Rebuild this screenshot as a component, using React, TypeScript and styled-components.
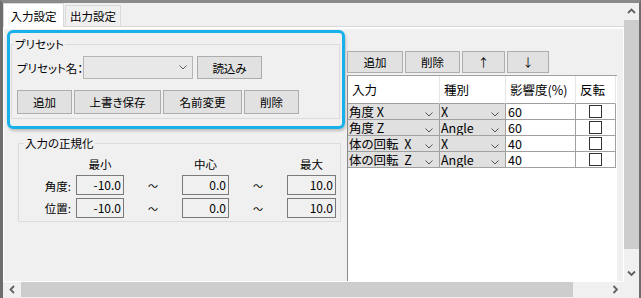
import React from "react";
import styled, { createGlobalStyle } from "styled-components";

const uiFont = `"Noto Sans CJK JP", "Noto Sans", sans-serif`;

const GlobalStyle = createGlobalStyle`
  html, body {
    margin: 0;
    padding: 0;
    background: #f0f0f0;
  }
  body {
    font-family: ${uiFont};
    font-feature-settings: "palt";
  }
`;

const Window = styled.div`
  width: 641px;
  height: 298px;
  box-sizing: border-box;
  border-top: 3px solid #8a8a8a;
  border-left: 3px solid #6e6e6e;
  border-right: 2px solid #6e6e6e;
  background: #f0f0f0;
  display: grid;
  grid-template-columns: 621px 15px;
  grid-template-rows: 279px 16px;
  font-family: ${uiFont};
  font-size: 11.5px;
  color: #000;
  overflow: hidden;
`;

const TabControl = styled.div`
  display: flex;
  flex-direction: column;
  min-height: 0;
`;

const TabStrip = styled.div`
  height: 23px;
  display: flex;
  align-items: flex-end;
`;

const Tab = styled.div<{ $active?: boolean; $w: number }>`
  width: ${(p) => p.$w}px;
  height: ${(p) => (p.$active ? 24 : 21)}px;
  box-sizing: border-box;
  display: flex;
  align-items: center;
  justify-content: center;
  background: ${(p) => (p.$active ? "#ffffff" : "#f0f0f0")};
  border: 1px solid #d9d9d9;
  border-bottom: none;
  margin-bottom: ${(p) => (p.$active ? -1 : 0)}px;
  margin-right: 1px;
  position: relative;
  z-index: ${(p) => (p.$active ? 1 : 0)};
`;

const TabPage = styled.div`
  flex: 1;
  border-top: 1px solid #d9d9d9;
  display: flex;
  min-height: 0;
`;

const PageInner = styled.div`
  flex: 1;
  border: 1px solid #ffffff;
  border-top-width: 2px;
  display: flex;
  min-height: 0;
`;

const LeftPane = styled.div`
  width: 343px;
  display: flex;
  flex-direction: column;
`;

const Highlight = styled.div`
  margin: 1px 0 0 3px;
  width: 338px;
  height: 99px;
  box-sizing: border-box;
  border: 3px solid #17b1ea;
  border-radius: 6px;
  box-shadow: 1px 2px 3px rgba(0, 0, 0, 0.22);
  display: flex;
`;

const Group = styled.fieldset`
  margin: 0;
  padding: 0;
  border: 1px solid #dcdcdc;
  min-inline-size: 0;
  box-sizing: border-box;
`;

const PresetGroup = styled(Group)`
  margin: 4px 2px 0 1px;
  width: 329px;
  height: 82px;
`;

const NormGroup = styled(Group)`
  margin: 7px 0 0 14px;
  width: 323px;
  height: 86px;
`;

const Legend = styled.legend<{ $offset: number }>`
  padding: 0 1px;
  margin-left: ${(p) => p.$offset}px;
  line-height: 14px;
  font-size: 11.5px;
`;

const PresetBody = styled.div`
  padding: 5px 0 0 5px;
  display: flex;
  flex-direction: column;
  gap: 11px;
`;

const FormRow = styled.div<{ $h: number }>`
  height: ${(p) => p.$h}px;
  display: flex;
  gap: 2px;
  align-items: stretch;
`;

const FieldLabel = styled.div`
  width: 64px;
  white-space: nowrap;
  display: flex;
  align-items: center;
`;

const Combo = styled.div<{ $w: number }>`
  width: ${(p) => p.$w}px;
  box-sizing: border-box;
  background: #e8e8e8;
  border: 1px solid #b5b5b5;
  display: flex;
  align-items: center;
  justify-content: flex-end;
  padding-right: 5px;
  margin-right: 2px;
`;

const Button = styled.button<{ $w: number }>`
  width: ${(p) => p.$w}px;
  box-sizing: border-box;
  margin: 0;
  padding: 0;
  background: #e1e1e1;
  border: 1px solid #adadad;
  font: inherit;
  font-feature-settings: "palt";
  color: #000;
  display: flex;
  align-items: center;
  justify-content: center;
`;

const NormGrid = styled.div`
  display: grid;
  grid-template-columns: 57px 48px 58px 47px 58px 49px;
  grid-template-rows: 17px 20px 20px;
  row-gap: 3px;
  padding-top: 5px;
  align-items: center;
  & > :nth-child(7) {
    margin-top: 1px;
  }
`;

const ColHead = styled.div`
  text-align: center;
`;

const RowLabel = styled.div`
  text-align: right;
  padding-right: 5px;
`;

const Tilde = styled.div`
  text-align: center;
  font-size: 10px;
`;

const NumBox = styled.div`
  height: 20px;
  box-sizing: border-box;
  border: 1px solid #7a7a7a;
  background: #f0f0f0;
  text-align: right;
  padding-right: 2px;
  line-height: 18px;
  font-size: 12px;
`;

const RightPane = styled.div`
  flex: 1;
  display: flex;
  flex-direction: column;
  padding: 22px 6px 0 0;
  min-height: 0;
`;

const Toolbar = styled.div`
  height: 22px;
  display: flex;
  gap: 2px;
  margin-bottom: 2px;
`;

const Grid = styled.div`
  flex: 1;
  background: #ffffff;
  border-left: 1px solid #8a8a8a;
  border-top: 1px solid #a0a0a0;
  display: grid;
  grid-template-columns: 92px 66px 70px 40px;
  grid-template-rows: 28px repeat(4, 16px);
  align-content: start;
  font-size: 12.5px;
`;

const HeadCell = styled.div`
  border-right: 1px solid #e6e6e6;
  border-bottom: 1px solid #a0a0a0;
  display: flex;
  align-items: center;
  padding-left: 4px;
`;

const Cell = styled.div<{ $combo?: boolean }>`
  border-right: 1px solid #a0a0a0;
  border-bottom: 1px solid #a0a0a0;
  background: ${(p) => (p.$combo ? "#e0e0e0" : "#ffffff")};
  display: flex;
  align-items: center;
  overflow: hidden;
  white-space: pre;
  line-height: 15px;
  padding-left: ${(p) => (p.$combo ? 1 : 2)}px;
`;

const CellText = styled.span`
  flex: 1;
`;

const Chevron = styled.svg`
  align-self: flex-end;
  margin: 0 6px 2px 0;
  flex: none;
`;

const CheckCell = styled(Cell)`
  justify-content: center;
  padding-left: 0;
`;

const Check = styled.span`
  width: 13px;
  height: 13px;
  box-sizing: border-box;
  border: 1px solid #333333;
  background: #ffffff;
`;

const VScroll = styled.div`
  display: flex;
  flex-direction: column;
  background: #f0f0f0;
`;

const HScroll = styled.div`
  display: flex;
  height: 15px;
  background: #f0f0f0;
`;

const ArrowBox = styled.div<{ $len: number; $vertical?: boolean }>`
  flex: none;
  ${(p) => (p.$vertical ? `height: ${p.$len}px;` : `width: ${p.$len}px;`)}
  display: flex;
  align-items: center;
  justify-content: center;
`;

const Thumb = styled.div<{ $len: number; $vertical?: boolean }>`
  flex: none;
  background: #cdcdcd;
  ${(p) => (p.$vertical ? `height: ${p.$len}px;` : `width: ${p.$len}px;`)}
`;

const Spacer = styled.div`
  flex: 1;
`;

const Corner = styled.div`
  background: #f0f0f0;
`;

const ScrollArrow: React.FC<{ dir: "up" | "down" | "left" | "right" }> = ({ dir }) => {
  const pts = {
    up: "1,5 4.5,1.5 8,5",
    down: "1,1.5 4.5,5 8,1.5",
    left: "5,1 1.5,4.5 5,8",
    right: "1.5,1 5,4.5 1.5,8",
  }[dir];
  const horiz = dir === "left" || dir === "right";
  return (
    <svg width={horiz ? 7 : 9} height={horiz ? 9 : 7}>
      <polyline points={pts} fill="none" stroke="#606060" strokeWidth="1.8" />
    </svg>
  );
};

const DropGlyph: React.FC = () => (
  <svg width="8" height="5">
    <polyline points="0.5,0.5 4,4 7.5,0.5" fill="none" stroke="#606060" strokeWidth="1" />
  </svg>
);

const rows = [
  { input: "角度 X", kind: "X", weight: "60" },
  { input: "角度 Z", kind: "Angle", weight: "60" },
  { input: "体の回転  X", kind: "X", weight: "40" },
  { input: "体の回転  Z", kind: "Angle", weight: "40" },
];

const norm = [
  { label: "角度:", values: ["-10.0", "0.0", "10.0"] },
  { label: "位置:", values: ["-10.0", "0.0", "10.0"] },
];

const ComboCell: React.FC<{ text: string }> = ({ text }) => (
  <Cell $combo>
    <CellText>{text}</CellText>
    <Chevron width="8" height="5">
      <polyline points="0.5,0.5 4,4 7.5,0.5" fill="none" stroke="#555" strokeWidth="1" />
    </Chevron>
  </Cell>
);

export default function App() {
  return (
    <>
      <GlobalStyle />
      <Window>
        <TabControl>
          <TabStrip>
            <Tab $active $w={61}>入力設定</Tab>
            <Tab $w={56}>出力設定</Tab>
          </TabStrip>
          <TabPage>
            <PageInner>
              <LeftPane>
                <Highlight>
                  <PresetGroup>
                    <Legend $offset={2}>プリセット</Legend>
                    <PresetBody>
                      <FormRow $h={23}>
                        <FieldLabel>プリセット名：</FieldLabel>
                        <Combo $w={110}>
                          <DropGlyph />
                        </Combo>
                        <Button $w={65}>読込み</Button>
                      </FormRow>
                      <FormRow $h={24}>
                        <Button $w={55}>追加</Button>
                        <Button $w={87}>上書き保存</Button>
                        <Button $w={79}>名前変更</Button>
                        <Button $w={55}>削除</Button>
                      </FormRow>
                    </PresetBody>
                  </PresetGroup>
                </Highlight>
                <NormGroup>
                  <Legend $offset={5}>入力の正規化</Legend>
                  <NormGrid>
                    <div />
                    <ColHead>最小</ColHead>
                    <div />
                    <ColHead>中心</ColHead>
                    <div />
                    <ColHead>最大</ColHead>
                    {norm.map((r) => (
                      <React.Fragment key={r.label}>
                        <RowLabel>{r.label}</RowLabel>
                        <NumBox>{r.values[0]}</NumBox>
                        <Tilde>～</Tilde>
                        <NumBox>{r.values[1]}</NumBox>
                        <Tilde>～</Tilde>
                        <NumBox>{r.values[2]}</NumBox>
                      </React.Fragment>
                    ))}
                  </NormGrid>
                </NormGroup>
              </LeftPane>
              <RightPane>
                <Toolbar>
                  <Button $w={56}>追加</Button>
                  <Button $w={55}>削除</Button>
                  <Button $w={43}>↑</Button>
                  <Button $w={42}>↓</Button>
                </Toolbar>
                <Grid>
                  <HeadCell>入力</HeadCell>
                  <HeadCell>種別</HeadCell>
                  <HeadCell>影響度(%)</HeadCell>
                  <HeadCell>反転</HeadCell>
                  {rows.map((r) => (
                    <React.Fragment key={r.input}>
                      <ComboCell text={r.input} />
                      <ComboCell text={r.kind} />
                      <Cell>
                        <CellText>{r.weight}</CellText>
                      </Cell>
                      <CheckCell>
                        <Check />
                      </CheckCell>
                    </React.Fragment>
                  ))}
                </Grid>
              </RightPane>
            </PageInner>
          </TabPage>
        </TabControl>
        <VScroll>
          <ArrowBox $vertical $len={17}>
            <ScrollArrow dir="up" />
          </ArrowBox>
          <Thumb $vertical $len={229} />
          <Spacer />
          <ArrowBox $vertical $len={17}>
            <ScrollArrow dir="down" />
          </ArrowBox>
        </VScroll>
        <HScroll>
          <ArrowBox $len={18}>
            <ScrollArrow dir="left" />
          </ArrowBox>
          <Thumb $len={552} />
          <Spacer />
          <ArrowBox $len={17}>
            <ScrollArrow dir="right" />
          </ArrowBox>
        </HScroll>
        <Corner />
      </Window>
    </>
  );
}
